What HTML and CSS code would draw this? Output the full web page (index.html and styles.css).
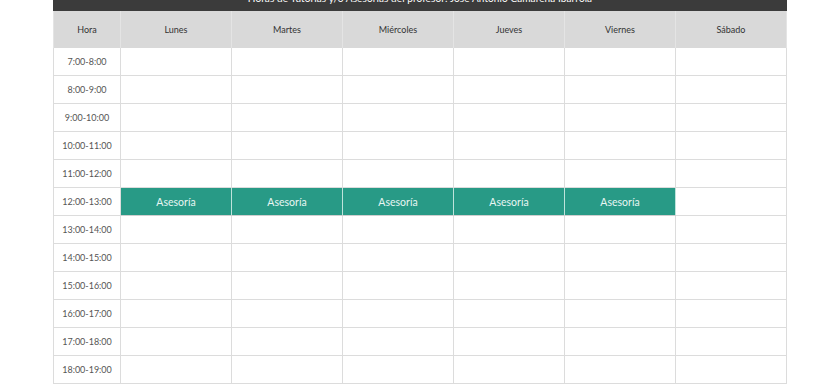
FILE: index.html
```html
<!DOCTYPE html>
<html lang="es">
<head>
<meta charset="utf-8">
<link rel="stylesheet" href="styles.css">
</head>
<body>
<div class="wrap">
  <table class="horario">
    <colgroup>
      <col class="c-hora">
      <col class="c-dia"><col class="c-dia"><col class="c-dia"><col class="c-dia"><col class="c-dia"><col class="c-dia">
    </colgroup>
    <caption class="titulo">Horas de Tutorías y/o Asesorías del profesor: José Antonio Camarena Ibarrola</caption>
    <thead>
      <tr><th>Hora</th><th>Lunes</th><th>Martes</th><th>Miércoles</th><th>Jueves</th><th>Viernes</th><th>Sábado</th></tr>
    </thead>
    <tbody>
      <tr><td class="hora">7:00-8:00</td><td></td><td></td><td></td><td></td><td></td><td></td></tr>
      <tr><td class="hora">8:00-9:00</td><td></td><td></td><td></td><td></td><td></td><td></td></tr>
      <tr><td class="hora">9:00-10:00</td><td></td><td></td><td></td><td></td><td></td><td></td></tr>
      <tr><td class="hora">10:00-11:00</td><td></td><td></td><td></td><td></td><td></td><td></td></tr>
      <tr><td class="hora">11:00-12:00</td><td></td><td></td><td></td><td></td><td></td><td></td></tr>
      <tr><td class="hora">12:00-13:00</td><td class="ases">Asesoría</td><td class="ases">Asesoría</td><td class="ases">Asesoría</td><td class="ases">Asesoría</td><td class="ases">Asesoría</td><td></td></tr>
      <tr><td class="hora">13:00-14:00</td><td></td><td></td><td></td><td></td><td></td><td></td></tr>
      <tr><td class="hora">14:00-15:00</td><td></td><td></td><td></td><td></td><td></td><td></td></tr>
      <tr><td class="hora">15:00-16:00</td><td></td><td></td><td></td><td></td><td></td><td></td></tr>
      <tr><td class="hora">16:00-17:00</td><td></td><td></td><td></td><td></td><td></td><td></td></tr>
      <tr><td class="hora">17:00-18:00</td><td></td><td></td><td></td><td></td><td></td><td></td></tr>
      <tr><td class="hora">18:00-19:00</td><td></td><td></td><td></td><td></td><td></td><td></td></tr>
    </tbody>
  </table>
</div>
</body>
</html>
```
FILE: styles.css
```css
html, body {
  margin: 0;
  padding: 0;
  background: #ffffff;
  overflow: hidden;
}
body {
  font-family: Lato, "Open Sans", sans-serif;
  color: #333333;
}
.wrap {
  width: 734px;
  margin: -19px auto 0;
}
.horario {
  width: 734px;
  table-layout: fixed;
  border-collapse: collapse;
}
.c-hora { width: 67px; }
.c-dia { width: 111px; }
.titulo {
  background: #3b3b3b;
  color: #ffffff;
  font-size: 10px;
  line-height: 14px;
  padding: 10px 0 6px;
  text-align: center;
  letter-spacing: 0.1px;
}
.horario th {
  background: #d9d9d9;
  height: 37px;
  padding: 0;
  font-size: 9px;
  font-weight: normal;
  color: #333;
  border-left: 1px solid #e4e4e4;
  border-right: 1px solid #e4e4e4;
  box-sizing: border-box;
}
.horario td {
  height: 27px;
  padding: 0;
  border: 1px solid #dcdcdc;
  text-align: center;
  font-size: 9px;
  color: #444;
}
.horario tbody tr:first-child td {
  border-top: none;
}
.horario td.hora {
  color: #555;
}
.horario td.ases {
  background: #289a86;
  color: #e9f6f3;
  font-size: 10.5px;
  border-left: 1px solid #bfe3db;
  border-right: 1px solid #bfe3db;
  border-top-color: #cfcfcf;
  border-bottom-color: #cfcfcf;
}
```
